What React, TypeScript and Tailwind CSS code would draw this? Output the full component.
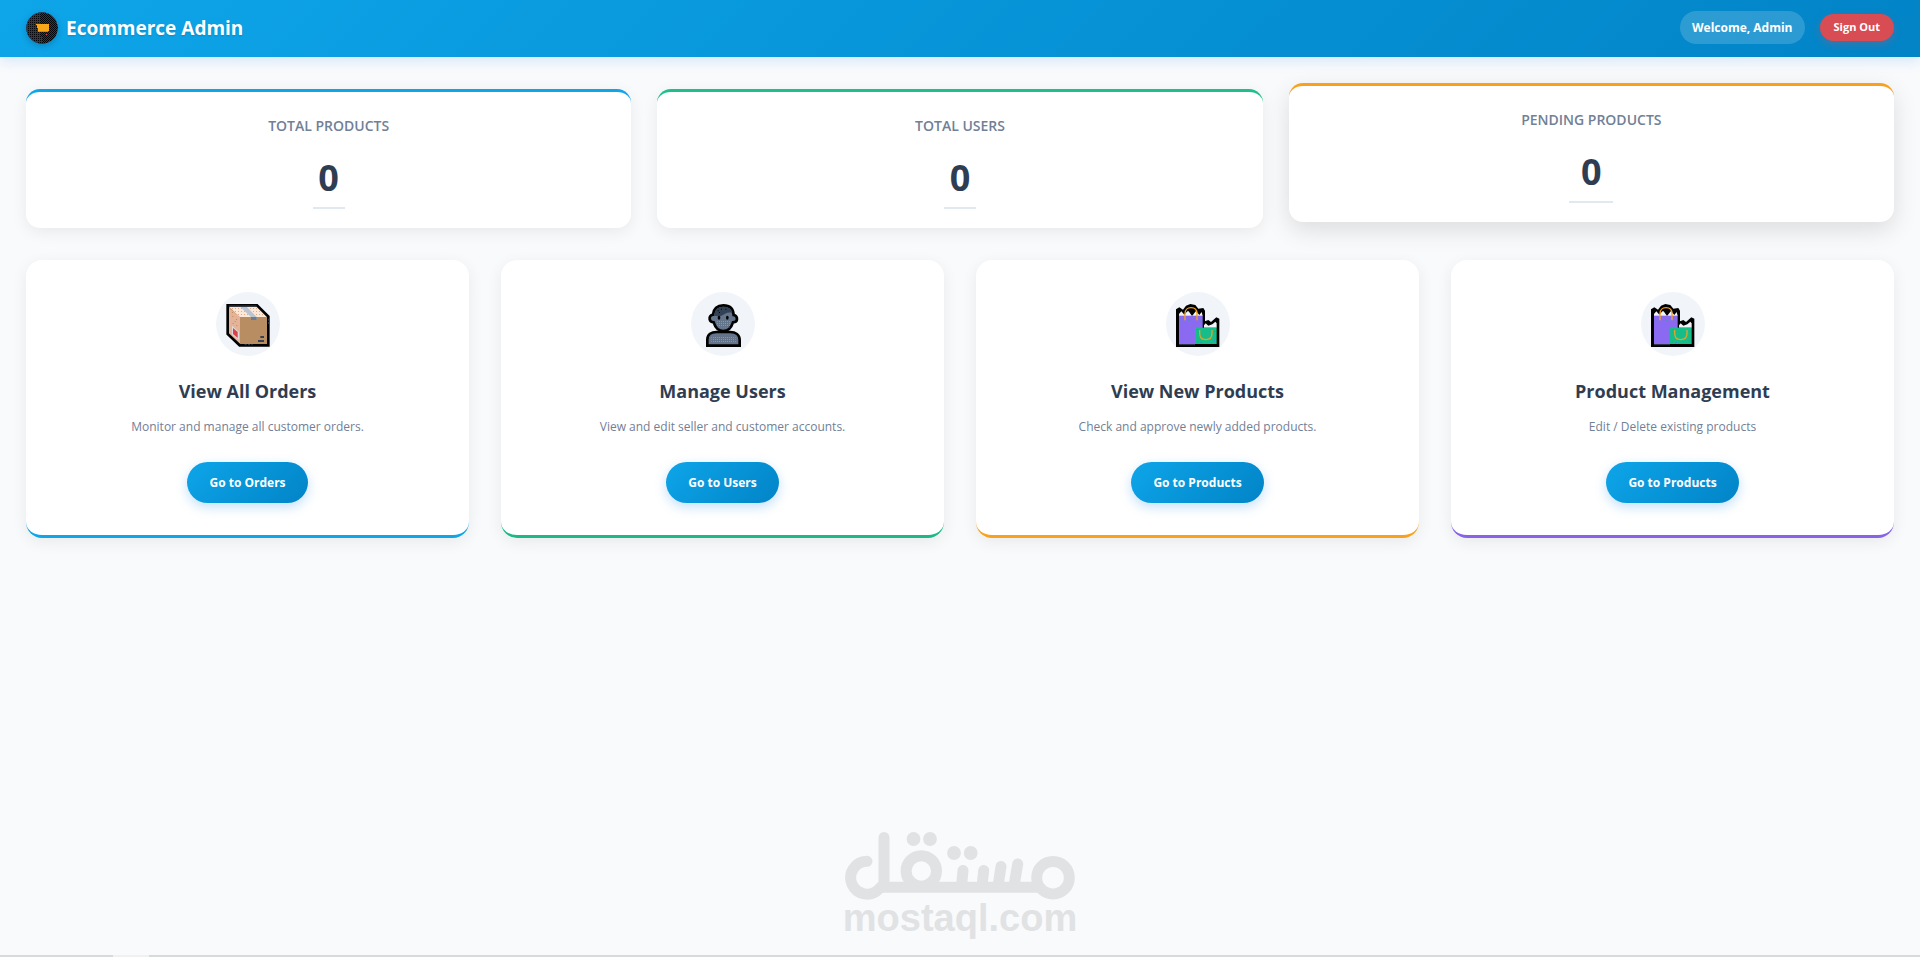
import type { ReactNode } from "react";

function CartLogo() {
  return (
    <svg viewBox="0 0 32 32" className="size-8 rounded-full shadow-[0_2px_6px_rgba(0,0,0,0.2)]" shapeRendering="crispEdges" aria-hidden="true">
      <defs>
        <pattern id="logo-dots" width="2" height="2" patternUnits="userSpaceOnUse">
          <rect width="1" height="1" fill="#05070c" />
        </pattern>
        <pattern id="logo-mesh" width="2" height="2" patternUnits="userSpaceOnUse">
          <path d="M0 0h1v1H0zM1 1h1v1H1z" fill="#05070c" />
        </pattern>
      </defs>
      <circle cx="16" cy="16" r="16" fill="#2b3a52" />
      <circle cx="16" cy="16" r="15" fill="url(#logo-dots)" />
      <path d="M15 1a15 15 0 0 1 3 30l-3-9z" fill="url(#logo-mesh)" />
      <path d="M10 12H23L22.500 19H12L11 13H10Z" fill="#f9a51a" />
      <path d="M12 19h10v1H12z" fill="#a8896b" />
      <path d="M20 22h1v1h-1z" fill="#d9484f" />
    </svg>
  );
}

function BoxIcon() {
  return (
    <svg viewBox="0 0 192 192" className="size-16" aria-hidden="true">
      <defs>
        <pattern id="box-dots" width="9" height="9" patternUnits="userSpaceOnUse">
          <rect x="3" y="3" width="3" height="3" fill="#e0a98c" />
        </pattern>
      </defs>
      <path d="M35 40H123L157 74V160H71L35 126Z" fill="#b98d62" />
      <path d="M38 43H123L154 75H71Z" fill="#fde8d8" />
      <path d="M38 43H123L154 75H71Z" fill="url(#box-dots)" />
      <path d="M37 46L72 75V160L37 127Z" fill="#e5b398" />
      <path d="M49 72h3v3h-3zM60 81h3v3h-3zM50 93h3v3h-3zM61 99h3v3h-3zM48 60h3v3h-3zM56 87h3v3h-3z" fill="#b98d62" />
      <path d="M70 42H90L122 75V83H105V75Z" fill="#b9c3d1" />
      <path d="M105 75h17v9h-17z" fill="#6b7b93" />
      <path d="M48 101L69 119V144L48 128Z" fill="#ddd9dc" />
      <path d="M51 108L65 120V138L51 126Z" fill="#d8434c" />
      <path d="M133 132h11v6h-11zM126 144h18v6h-18z" fill="#334155" />
      <path d="M35 40H123L157 74V160H71L35 126Z" fill="none" stroke="#000" strokeWidth="8" />
      <path d="M40 42h82" stroke="#334155" strokeWidth="3" />
      <path d="M158 80v20M86 158h24" stroke="#334155" strokeWidth="3" strokeDasharray="6 4" />
    </svg>
  );
}

function UserIcon() {
  return (
    <svg viewBox="0 0 192 192" className="size-16" aria-hidden="true">
      <defs>
        <pattern id="user-dots" width="12" height="12" patternUnits="userSpaceOnUse">
          <path d="M0 3h3v3H0zM6 9h3v3H6z" fill="#c88d4c" />
          <path d="M6 3h3v3H6zM0 9h3v3H0z" fill="#8b93a3" />
        </pattern>
      </defs>
      <path d="M49 161V143C49 127 62 120 76 120H118C133 120 146 128 146 144V161Z" fill="#64748b" />
      <path d="M61 133H134V153H61Z" fill="url(#user-dots)" />
      <path d="M49 161V143C49 127 62 120 76 120H118C133 120 146 128 146 144V161Z" fill="none" stroke="#000" strokeWidth="8" />
      <path d="M97 40C79 40 68 50 66 68C58 69 55 75 56 82C57 88 62 91 68 91C73 107 84 117 97 117C111 117 121 107 126 91C133 91 138 87 138 81C138 74 134 70 128 69C127 50 115 40 97 40Z" fill="#64748b" stroke="#000" strokeWidth="8" />
      <path d="M97 44C82 44 70 54 69 72H90L108 62L124 61C121 50 112 44 97 44Z" fill="#334155" />
      <path d="M75 84H120V106H80Z" fill="url(#user-dots)" />
      <ellipse cx="84" cy="77" rx="4" ry="6" fill="#000" />
      <ellipse cx="109" cy="77" rx="4" ry="6" fill="#000" />
      <path d="M80 55h3v3h-3zM90 50h3v3h-3zM84 60h3v3h-3zM103 50h3v3h-3z" fill="#000" />
    </svg>
  );
}

function BagsIcon() {
  return (
    <svg viewBox="0 0 192 192" className="size-16" aria-hidden="true">
      <path d="M30 165V52L40 46L51 53L60 41L73 36L88 39L97 50L112 48L117 56V88L127 84L135 90L151 76L160 80V165Z" fill="#000" />
      <path d="M39 72V66L46 58L55 68L64 58H68L78 72L90 57L100 69L107 60L110 72Z" fill="#f1f3f8" />
      <path d="M114 107V100L119 94L127 101L139 97L148 89L152 94V107Z" fill="#f1f3f8" />
      <path d="M39 71H110V156H39Z" fill="#8b6af2" />
      <path d="M87 107H152V156H87Z" fill="#16bd89" />
      <path d="M57 85V65C57 54 65 47 75 47C86 47 93 54 93 65V85" fill="none" stroke="#f7a21b" strokeWidth="4" />
      <path d="M101 114V124C101 136 108 143 119 143C131 143 138 136 138 124V114" fill="none" stroke="#d9a72e" strokeWidth="4" />
      <path d="M46 84h3v3h-3zM66 84h3v3h-3zM75 84h3v3h-3zM101 84h3v3h-3z" fill="#5a86c9" />
      <path d="M92 112h3v3h-3zM92 148h3v3h-3zM104 150h3v3h-3zM144 145h3v3h-3zM145 117h3v3h-3z" fill="#3b82d6" />
      <path d="M39 158h48" stroke="#334155" strokeWidth="3" />
    </svg>
  );
}

function Watermark() {
  return (
    <div className="flex w-[230px] flex-col items-center text-[#e1e2e4]">
      <svg viewBox="0 0 230 68" className="h-[68px] w-[230px]" fill="none" stroke="currentColor" strokeWidth="11" strokeLinecap="round" role="img" aria-label="مستقل">
        <path d="M22 29.300A16.400 16.400 0 1 0 34 57L39 52V5.500" />
        <path d="M36 55.300H194" />
        <circle cx="76.300" cy="39" r="15.200" />
        <circle cx="208" cy="45.700" r="16.300" />
        <path d="M118 38.500L116.500 54M138.700 38.500L137 54M156 34.500L153 54M172.700 32L169 54" />
        <g fill="currentColor" stroke="none">
          <circle cx="68.500" cy="7" r="6.900" />
          <circle cx="85" cy="7" r="6.900" />
          <circle cx="109" cy="21" r="6.900" />
          <circle cx="125.700" cy="21" r="6.900" />
        </g>
      </svg>
      <span className="font-['Liberation_Sans',sans-serif] text-[38px] leading-9 font-bold">mostaql.com</span>
    </div>
  );
}

type Stat = { label: string; value: number; border: string; raised?: boolean };

const stats: Stat[] = [
  { label: "TOTAL PRODUCTS", value: 0, border: "border-[#0ea5e9]" },
  { label: "TOTAL USERS", value: 0, border: "border-[#1dbf8a]" },
  { label: "PENDING PRODUCTS", value: 0, border: "border-[#f9a11b]", raised: true },
];

type Action = { icon: ReactNode; title: string; text: string; button: string; border: string };

const actions: Action[] = [
  { icon: <BoxIcon />, title: "View All Orders", text: "Monitor and manage all customer orders.", button: "Go to Orders", border: "border-[#0ea5e9]" },
  { icon: <UserIcon />, title: "Manage Users", text: "View and edit seller and customer accounts.", button: "Go to Users", border: "border-[#1ab987]" },
  { icon: <BagsIcon />, title: "View New Products", text: "Check and approve newly added products.", button: "Go to Products", border: "border-[#f9a11b]" },
  { icon: <BagsIcon />, title: "Product Management", text: "Edit / Delete existing products", button: "Go to Products", border: "border-[#8763e8]" },
];

function StatCard({ label, value, border, raised }: Stat) {
  return (
    <section
      className={`flex flex-col items-center rounded-[14px] border-t-3 bg-white px-6 pt-6 pb-[19px] ${border} ${
        raised ? "-translate-y-1.5 shadow-[0_8px_24px_rgba(0,0,0,0.12)]" : "shadow-[0_4px_16px_rgba(0,0,0,0.07)]"
      }`}
    >
      <h2 className="text-sm leading-5 font-semibold text-[#718096]">{label}</h2>
      <p className="mt-5 text-4xl leading-[44px] font-bold text-[#2f3d52]">{value}</p>
      <div className={`mt-[7px] h-0.5 bg-[#e2e8f0] ${raised ? "w-11" : "w-8"}`} />
    </section>
  );
}

function ActionCard({ icon, title, text, button, border }: Action) {
  return (
    <section className={`flex flex-col items-center rounded-2xl border-b-3 bg-white px-6 py-8 shadow-[0_4px_16px_rgba(0,0,0,0.07)] ${border}`}>
      <div className="flex size-16 items-center justify-center rounded-full bg-[#f1f5f9]">{icon}</div>
      <h2 className="mt-[23px] text-lg leading-6 font-bold text-[#2f3d52]">{title}</h2>
      <p className="mt-3.5 text-xs leading-5 text-[#718096]">{text}</p>
      <button
        type="button"
        className="mt-[25px] h-[41px] cursor-pointer rounded-full bg-linear-135 from-[#0ea5e9] to-[#0284c7] px-[22px] text-xs font-bold text-white shadow-[0_4px_12px_rgba(14,130,233,0.25)]"
      >
        {button}
      </button>
    </section>
  );
}

export default function App() {
  return (
    <div className="flex min-h-screen flex-col bg-[#f9fafc] font-['Open_Sans','Noto_Sans',sans-serif]">
      <header className="flex h-[57px] items-center justify-between bg-linear-135 from-[#0ea5e9] to-[#0284c7] px-[26px] pb-[2px] shadow-[0_4px_12px_rgba(14,130,233,0.15)]">
        <div className="flex items-center gap-2">
          <CartLogo />
          <h1 className="text-[19px] leading-8 font-bold text-white [text-shadow:0_1px_2px_rgba(0,0,0,0.15)]">Ecommerce Admin</h1>
        </div>
        <div className="flex items-center gap-[15px]">
          <span className="flex h-[33px] items-center rounded-full bg-white/17 px-3 text-xs font-bold text-white">Welcome, Admin</span>
          <button
            type="button"
            className="h-[27px] cursor-pointer rounded-full bg-[#d84c53] px-3.5 text-[11px] font-bold text-white shadow-[0_3px_8px_rgba(216,76,83,0.3)]"
          >
            Sign Out
          </button>
        </div>
      </header>

      <main className="flex flex-col gap-8 px-[26px] pt-8 pb-8">
        <div className="grid grid-cols-3 gap-[26px]">
          {stats.map((stat) => (
            <StatCard key={stat.label} {...stat} />
          ))}
        </div>
        <div className="grid grid-cols-4 gap-8">
          {actions.map((action) => (
            <ActionCard key={action.title} {...action} />
          ))}
        </div>
      </main>

      <footer className="mt-auto flex flex-col items-center gap-[19px]">
        <Watermark />
        <div className="flex h-0.5 w-full bg-[#d6dada]">
          <div className="ml-[113px] w-9 bg-[#f0f0f0]" />
        </div>
      </footer>
    </div>
  );
}
